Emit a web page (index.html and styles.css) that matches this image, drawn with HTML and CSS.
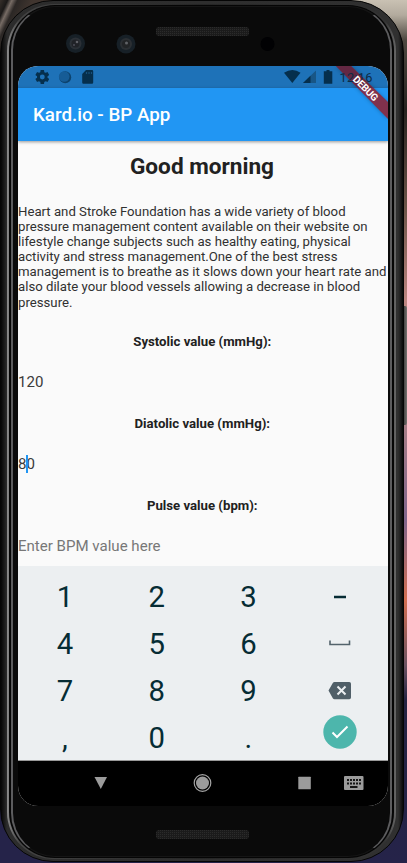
FILE: index.html
```html
<!DOCTYPE html>
<html lang="en">
<head>
<meta charset="utf-8">
<title>Kard.io - BP App</title>
<link rel="stylesheet" href="styles.css">
</head>
<body>
<div class="side-button"></div>
<div class="phone"><div class="rim"><div class="groove"><div class="bezel">
  <div class="bezel-top">
    <svg width="370" height="60" viewBox="18 6 370 60">
      <defs><pattern id="mesh" width="2" height="2" patternUnits="userSpaceOnUse"><rect width="2" height="2" fill="#1b1b1b"/><rect width="1" height="1" fill="#2b2b2b"/></pattern></defs>
      <circle cx="75.500" cy="42.500" r="9.500" fill="#172027"/><circle cx="75.500" cy="42.500" r="6" fill="#2b3036"/><circle cx="75.500" cy="42.500" r="4" fill="#202227"/><circle cx="77" cy="41" r="1.300" fill="#606167"/><circle cx="74" cy="44" r="1" fill="#4c4e58"/>
      <circle cx="126" cy="43" r="9.500" fill="#172027"/><circle cx="126" cy="43" r="6" fill="#2b2f33"/><circle cx="126" cy="43" r="4" fill="#222426"/><circle cx="126.500" cy="42" r="1.500" fill="#606266"/>
      <rect x="156" y="26" width="93" height="9" rx="3" fill="url(#mesh)"/>
      <circle cx="267.500" cy="43" r="7" fill="#010103"/>
    </svg>
  </div>
  <main class="screen">
    <header class="status">
      <svg width="370" height="22" viewBox="18 66 370 22">
        <g fill="#052f4d">
          <path transform="translate(33.900 68.600) scale(.7)" d="M19.430 12.980c.04-.32.07-.64.07-.98s-.03-.66-.07-.98l2.110-1.650c.19-.15.24-.42.12-.64l-2-3.460c-.12-.22-.39-.3-.61-.22l-2.490 1c-.52-.4-1.080-.73-1.690-.98l-.38-2.650C14.460 2.180 14.250 2 14 2h-4c-.25 0-.46.18-.49.42l-.38 2.650c-.61.25-1.170.59-1.690.98l-2.490-1c-.23-.09-.49 0-.61.22l-2 3.460c-.13.22-.07.49.12.64l2.110 1.650c-.04.32-.07.65-.07.98s.03.66.07.98l-2.110 1.650c-.19.15-.24.42-.12.64l2 3.460c.12.22.39.3.61.22l2.490-1c.52.4 1.080.73 1.690.98l.38 2.650c.03.24.24.42.49.42h4c.25 0 .46-.18.49-.42l.38-2.650c.61-.25 1.170-.59 1.690-.98l2.490 1c.23.09.49 0 .61-.22l2-3.460c.12-.22.07-.49-.12-.64zM12 15.500a3.500 3.500 0 1 1 0-7 3.500 3.500 0 0 1 0 7z"/>
          <circle cx="65.200" cy="77.300" r="6" opacity=".7"/><circle cx="64.200" cy="76.500" r="5.300" fill="#165c96"/>
          <path d="M86 70h6a1.200 1.200 0 0 1 1.200 1.200v11.300a1.200 1.200 0 0 1-1.200 1.200h-8.600a1.200 1.200 0 0 1-1.200-1.200v-8.600z"/><path d="M86.500 72v2M89 72v2M91.500 72v2" stroke="#17517d" stroke-width="1.200"/>
          <path d="M284 72.700q8.500-5.300 16.500 0L292.300 83z"/>
          <path d="M316 70.500V83h-13z" fill="#185686"/><path d="M310.500 75.800V83H303z"/>
          <path d="M326.500 70h3v1.300h2.800v12.500h-8.500V71.300h2.700z"/>
        </g>
      </svg>
    </header>
    <div class="appbar">Kard.io - BP App</div>
    <section class="content">
      <h1>Good morning</h1>
      <p class="advice">Heart and Stroke Foundation has a wide variety of blood<br>pressure management content available on their website on<br>lifestyle change subjects such as healthy eating, physical<br>activity and stress management.One of the best stress<br>management is to breathe as it slows down your heart rate and<br>also dilate your blood vessels allowing a decrease in blood<br>pressure.</p>
      <div class="label">Systolic value (mmHg):</div><div class="value">120</div>
      <div class="label">Diatolic value (mmHg):</div><div class="value">8<i class="caret"></i>0</div>
      <div class="label">Pulse value (bpm):</div><div class="value hint">Enter BPM value here</div>
    </section>
    <section class="keys">
      <span>1</span><span>2</span><span>3</span><span class="icon"><svg width="34" height="34" viewBox="0 0 34 34"><path d="M11 17h12" stroke="#062c34" stroke-width="2.500"/></svg></span>
      <span>4</span><span>5</span><span>6</span><span class="icon"><svg width="34" height="34" viewBox="0 0 34 34"><path d="M7 13.500v4h19.500v-4" fill="none" stroke="#53636c" stroke-width="1.600"/></svg></span>
      <span>7</span><span>8</span><span>9</span><span class="icon"><svg width="34" height="34" viewBox="0 0 34 34"><path d="M11.500 8h14.800a1.700 1.700 0 0 1 1.700 1.700v13.800a1.700 1.700 0 0 1-1.700 1.700H11.500q-1 0-1.700-1L5.500 16.600 9.800 9q.7-1 1.700-1z" fill="#505f68"/><path d="m14.500 12.500 8 8m0-8-8 8" stroke="#eceff1" stroke-width="2"/></svg></span>
      <span>,</span><span>0</span><span>.</span><span class="done"><svg width="34" height="34" viewBox="0 0 34 34"><circle cx="17" cy="17" r="16.700" fill="#4db6ac"/><path d="m9.500 17.500 4.500 4.500 10.500-10.500" fill="none" stroke="#fff" stroke-width="2"/></svg></span>
    </section>
    <nav class="nav">
      <svg width="370" height="45" viewBox="18 761 370 45" fill="#9b9b9b">
        <path d="M94.500 777h12.500l-6.200 12z"/>
        <circle cx="202.500" cy="783" r="6.500"/><circle cx="202.500" cy="783" r="8.300" fill="none" stroke="#a5a5a5" stroke-width="1.200"/>
        <rect x="298.300" y="776.700" width="12.500" height="12.500" rx=".5"/>
        <rect x="344" y="776" width="19.500" height="14" rx="1"/>
        <path d="M347 780h14M347 783.500h14" stroke="#161616" stroke-width="2" stroke-dasharray="2 1"/><path d="M350 787h7.500" stroke="#161616" stroke-width="1.800"/>
      </svg>
    </nav>
    <svg class="debug" width="60" height="60" viewBox="328 66 60 60">
      <defs><filter id="soft" x="-30%" y="-30%" width="160%" height="160%"><feGaussianBlur stdDeviation="2"/></filter></defs>
      <path d="M336 66h15l37 37v16z" fill="#000" opacity=".3" filter="url(#soft)"/>
      <path d="M336 66h15l37 36v17z" fill="#80314c"/>
      <path d="M336 66h15l22 22h-15z" fill="#642843"/>
      <text class="clock" x="339.500" y="82" textLength="33">12:16</text>
      <text class="banner" transform="translate(365.500 88.500) rotate(45)" y="3.300" text-anchor="middle" textLength="31">DEBUG</text>
    </svg>
  </main>
  <div class="bezel-bottom"><svg width="93" height="9"><rect width="93" height="9" rx="3" fill="url(#mesh)"/></svg></div>
</div></div></div></div>
</body>
</html>
```
FILE: styles.css
```css
* { box-sizing: border-box; }
body {
  margin: 0; width: 407px; height: 863px; overflow: hidden; position: relative;
  font-family: Roboto, sans-serif; color: #212121;
  background:
    linear-gradient(115deg, #37302b 0, #1b1918 7px, #776c65 11px, #2b2725 16px, #40352f 30px) 0 0 / 60px 60px no-repeat,
    linear-gradient(#55504d 0, #181717 60px, #111 700px, #252349 800px) 0 0 / 30px 100% no-repeat,
    linear-gradient(#c9c1b3 0, #b3ab9e 15px, #4e4840 40px, #25221f 110px, #6d5549 210px, #bd8580 300px, #aa7f87 420px, #80658c 520px, #d36e51 600px, #6c5362 665px, #242342 700px, #252349 863px);
}
.side-button { position: absolute; left: 402px; top: 306px; width: 5px; height: 119px; background: linear-gradient(90deg, #222, #777471); border-radius: 0 2px 2px 0; }
.phone { position: absolute; left: 0; top: 0; width: 404px; height: 862px; padding: 3px 7px 2px 6px; border-radius: 53px; background: linear-gradient(90deg, #050505 0, #181818 3px, #2c2c2c 6px, #303030 397px, #1a1a1a 400px, #080808); border: 1px solid #050505; }
.rim { height: 100%; padding: 1px 2px; border-radius: 47px; background: linear-gradient(90deg, #8a8a8a, #444 12px, #252525 50%, #333 378px, #666); }
.groove { height: 100%; padding: 1px 2px; border-radius: 46px; background: #050505; }
.bezel { height: 100%; padding: 0 2px 0 5px; border: solid #5c5c5e; border-width: 1px 2px; border-top-color: #151515; border-bottom-color: #151515; border-radius: 44px; background: #0a0a0a; display: flex; flex-direction: column; align-items: center; }
.bezel-top { height: 59px; flex: none; }
.bezel-top svg, .status svg, .nav svg { display: block; }
.screen { position: relative; width: 370px; height: 740px; flex: none; overflow: hidden; border-radius: 20px; background: #fafafa; }
.status { height: 22px; background: #1e72b8; }
.appbar { position: relative; height: 53px; padding-left: 15px; background: #2196f3; color: #fff; font-size: 18.800px; font-weight: 500; line-height: 54px; box-shadow: 0 1px 3px #0006; }
.content { height: 425px; background: #fafafa; }
h1 { margin: 0; padding: 12px 2px 0 0; height: 63px; text-align: center; font-size: 22.600px; line-height: 27px; font-weight: 700; }
.advice { margin: 0; font-size: 13.200px; line-height: 15.100px; height: 107px; white-space: nowrap; color: #313131; }
.label { margin-top: 22px; padding-right: 1.500px; height: 17px; text-align: center; font-size: 13.200px; line-height: 17px; font-weight: 700; }
.value { height: 43px; padding-top: 22px; font-size: 15.050px; line-height: 20px; color: #3c3c3c; position: relative; }
.value.hint { color: #777; }
.caret { position: absolute; left: 8px; top: 23px; width: 2px; height: 18px; background: #2196f3; }
.keys { height: 195px; padding: 8px 2px 0 1px; background: #eceff1; border-bottom: 1px solid #999; display: grid; grid-template-columns: repeat(4, 1fr); grid-template-rows: repeat(4, 47px); color: #062c34; }
.keys span { display: flex; align-items: center; justify-content: center; font-size: 29.300px; line-height: 47px; }
.keys .icon { padding: 0 0 2px; }
.keys .done { align-items: flex-start; }
.nav { height: 45px; background: #000; }
.debug { position: absolute; right: 0; top: 0; }
.clock { font-size: 12.800px; fill: #0d2b45; }
.banner { font-size: 10px; font-weight: 700; fill: #fff; }
.bezel-bottom { margin-top: 24px; padding-right: 2px; height: 9px; }
.bezel-bottom svg { display: block; }
```
